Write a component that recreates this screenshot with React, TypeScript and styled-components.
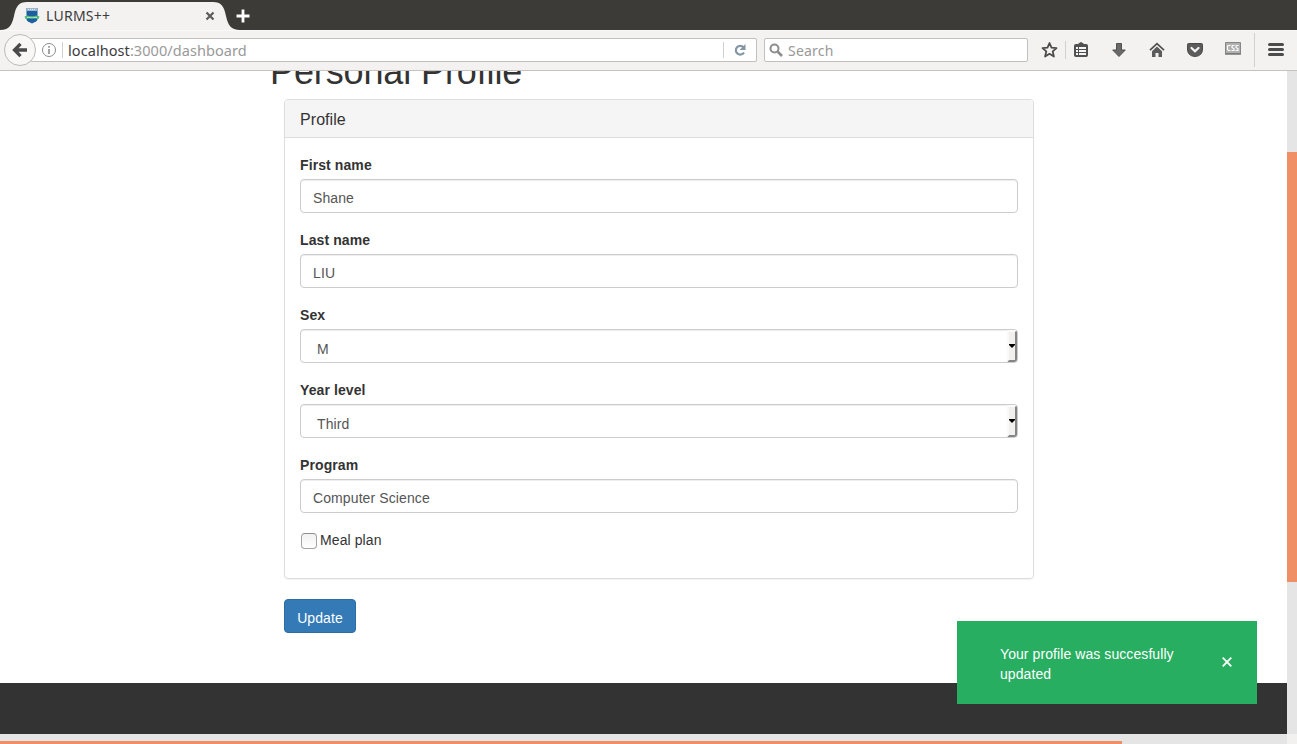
import React from "react";
import styled, { createGlobalStyle } from "styled-components";

const GlobalStyle = createGlobalStyle`
  * { box-sizing: border-box; }
  body { margin: 0; overflow: hidden; background: #fff; color: #333; font: 14px/20px "Liberation Sans", Arial, sans-serif; }
  svg { display: block; flex: none; }
`;

const Window = styled.div`
  display: flex;
  flex-direction: column;
  width: 1297px;
  height: 744px;
`;

const TabStrip = styled.div`
  display: flex;
  position: relative;
  height: 30px;
  flex: none;
  background: #3c3b37;
`;

const TabShape = styled.svg`
  position: absolute;
  left: 0;
  top: 0;
`;

const Tab = styled.div`
  position: relative;
  display: flex;
  align-items: center;
  width: 228px;
  height: 30px;
  padding: 1px 11px 0 24px;
`;

const ChromeText = styled.span<{ $size: number; $spacing?: number; $color?: string }>`
  font-family: "Noto Sans", "Open Sans", sans-serif;
  font-size: ${(p) => p.$size}px;
  line-height: 20px;
  letter-spacing: ${(p) => p.$spacing ?? 0}px;
  color: ${(p) => p.$color ?? "#3c3c3c"};
  white-space: pre;
`;

const TabTitle = styled(ChromeText)`
  flex: 1;
  margin-left: 6px;
`;

const NewTab = styled.div`
  position: relative;
  padding: 9px 0 0 8px;
`;

const Toolbar = styled.div`
  display: flex;
  align-items: center;
  height: 41px;
  flex: none;
  padding: 0 0 1px 4px;
  background: #f3f2f0;
  border-bottom: 1px solid #c6c2bf;
  border-top: 1px solid #f9f8f7;
`;

const BackButton = styled.div`
  position: relative;
  display: flex;
  align-items: center;
  justify-content: center;
  width: 32px;
  height: 32px;
  flex: none;
  border: 1px solid #bdbab7;
  border-radius: 50%;
  background: #f8f7f6;
`;

const Field = styled.div<{ $width: number }>`
  display: flex;
  align-items: center;
  width: ${(p) => p.$width}px;
  height: 24px;
  flex: none;
  background: #fff;
  border: 1px solid #c2bfbc;
  border-radius: 2px;
`;

const AddressBar = styled(Field)`
  margin-left: -6px;
  padding-left: 11px;
  border-left: 0;
`;

const SearchBar = styled(Field)`
  margin-left: 7px;
  padding-left: 4px;
`;

const Divider = styled.div<{ $height: number; $left: number; $right: number }>`
  width: 1px;
  height: ${(p) => p.$height}px;
  flex: none;
  margin: 0 ${(p) => p.$right}px 0 ${(p) => p.$left}px;
  background: #d2cfcc;
`;

const Address = styled.div`
  display: flex;
  flex: 1;
`;

const IconRow = styled.div`
  display: flex;
  align-items: center;
  margin-left: 13px;
`;

const Main = styled.div`
  display: grid;
  grid-template-columns: 1287px 10px;
  grid-template-rows: 663px 10px;
  height: 673px;
`;

const Viewport = styled.main`
  position: relative;
  display: flex;
  flex-direction: column;
  overflow: hidden;
  background: #fff;
`;

const VerticalTrack = styled.div`
  background: #e5e5e5;
  padding-top: 81px;
`;

const VerticalThumb = styled.div`
  height: 430px;
  background: #f08e65;
`;

const HorizontalTrack = styled.div`
  display: flex;
  align-items: flex-end;
  background: #e5e5e5;
`;

const HorizontalThumb = styled.div`
  width: 1122px;
  height: 3px;
  background: #f08e65;
`;

const Corner = styled.div`
  background: #f2f1f0;
`;

const Content = styled.div`
  flex: 1;
  padding-left: 269px;
`;

const Heading = styled.h1`
  margin: -19px 0 7px;
  padding-left: 1px;
  font-size: 36px;
  line-height: 40px;
  font-weight: 400;
  letter-spacing: -0.12px;
`;

const Form = styled.form`
  width: 750px;
  margin-left: 15px;
`;

const Panel = styled.section`
  height: 480px;
  border: 1px solid #ddd;
  border-radius: 4px;
  box-shadow: 0 1px 1px rgba(0, 0, 0, 0.05);
`;

const PanelHeader = styled.h3`
  height: 38px;
  margin: 0;
  padding: 10px 15px 0;
  font-size: 16px;
  line-height: 19px;
  font-weight: 400;
  letter-spacing: 0.07px;
  background: #f5f5f5;
  border-bottom: 1px solid #ddd;
  border-radius: 3px 3px 0 0;
`;

const PanelBody = styled.div`
  padding: 17px 15px 15px;
`;

const Group = styled.div`
  margin-bottom: 15px;
`;

const Label = styled.label`
  display: block;
  height: 20px;
  margin-bottom: 4px;
  line-height: 20px;
  font-weight: 700;
  letter-spacing: 0.1px;
`;

const Control = styled.div<{ $select?: boolean }>`
  display: flex;
  justify-content: space-between;
  height: 34px;
  margin-bottom: 17px;
  padding: ${(p) => (p.$select ? "9px 0 0 16px" : "8px 12px 0")};
  color: #555;
  letter-spacing: 0.1px;
  border: 1px solid #ccc;
  border-radius: 4px;
  box-shadow: inset 0 1px 1px rgba(0, 0, 0, 0.075);
`;

const SelectArrow = styled.div`
  width: 10px;
  height: 32px;
  margin-top: -9px;
  padding: 12px 0 0;
  background: #f1f0ee;
  border-left: 2px solid #f9f9f9;
  border-right: 2px solid #858585;
  border-bottom: 2px solid #858585;
  border-top: 2px solid #fafafa;
  border-radius: 0 3px 3px 0;
`;

const CheckLabel = styled.label`
  display: flex;
  height: 20px;
  letter-spacing: 0.1px;
`;

const CheckBox = styled.span`
  width: 16px;
  height: 16px;
  margin: 3px 3px 0 1px;
  border: 1px solid #a3a3a3;
  border-top-color: #8f8f8f;
  border-radius: 4px;
  background: linear-gradient(#f1f1f1, #fff);
`;

const UpdateButton = styled.button`
  display: block;
  width: 72px;
  height: 34px;
  margin-top: 20px;
  padding: 4px 0 0;
  color: #fff;
  font: inherit;
  letter-spacing: 0.1px;
  background: #337ab7;
  border: 1px solid #2e6da4;
  border-radius: 4px;
`;

const Footer = styled.footer`
  height: 51px;
  flex: none;
  background: #333;
`;

const Toast = styled.div`
  position: absolute;
  right: 30px;
  bottom: 30px;
  display: flex;
  align-items: flex-start;
  width: 300px;
  height: 83px;
  padding: 23px 25px 0 43px;
  color: #fff;
  background: #27ae60;
`;

const ToastText = styled.p`
  flex: 1;
  margin: 0 30px 0 0;
  letter-spacing: 0.08px;
`;

const ToastClose = styled.div`
  margin-top: 13px;
`;

const Favicon = () => (
  <svg width="16" height="16" viewBox="0 0 16 16">
    <path d="M2.500 0h11v11q0 1.500-1.500 2.500l-4 2-4-2q-1.500-1-1.500-2.500z" fill="#1b5f9f" />
    <path d="M2.500 0h11v3h-11z" fill="#9eb7cd" />
    <path d="M4 1.500h8" stroke="#dce7ef" strokeDasharray="1 1" />
    <path d="M.5 8.500L3 7.500q5 1.500 10 0l2.500 1-1 2.500q-6.500-1.500-13 0z" fill="#4dbb79" />
    <path d="M3 9.300q5 1 10 0" stroke="#b4e3c5" fill="none" />
  </svg>
);

const StarIcon = () => (
  <svg width="17" height="18" viewBox="0 0 17 18">
    <path d="M8.500 2l2 4.600 5 .5-3.800 3.300 1.200 5.100-4.400-2.700-4.400 2.700 1.200-5.100-3.800-3.300 5-.5z" fill="none" stroke="#4c4c4c" strokeWidth="1.800" strokeLinejoin="round" />
  </svg>
);

const ClipboardIcon = () => (
  <svg width="16" height="16" viewBox="0 0 16 16">
    <path d="M2.500 2.500H5L7.200.8h1.600L11 2.500h2.500q1 0 1 1v10q0 1-1 1h-11q-1 0-1-1v-10q0-1 1-1z" fill="#505050" stroke="#505050" />
    <path d="M3 6h2m1 0h7M3 9h2m1 0h7M3 12h2m1 0h7" stroke="#f5f5f5" strokeWidth="2" />
  </svg>
);

const DownloadIcon = () => (
  <svg width="16" height="16" viewBox="0 0 16 16">
    <path d="M5.500 1.500h5V8h3.800L8 14.500 1.700 8h3.800z" fill="#696969" stroke="#505050" strokeLinejoin="round" />
  </svg>
);

const HomeIcon = () => (
  <svg width="16" height="16" viewBox="0 0 16 16">
    <path d="M1 8.200L8 1.700l7 6.500" fill="none" stroke="#505050" strokeWidth="1.700" />
    <path d="M3 9.300l5-4.800 5 4.800V15H9.500v-4h-3v4H3z" fill="#5c5c5c" />
  </svg>
);

const PocketIcon = () => (
  <svg width="16" height="16" viewBox="0 0 16 16">
    <path d="M1.500 1.500h13q1 0 1 1V7q0 7-7.500 7.500Q.5 14 .5 7V2.500q0-1 1-1z" fill="#5c5c5c" stroke="#484848" />
    <path d="M4.500 6L8 9.300 11.500 6" fill="none" stroke="#f5f5f5" strokeWidth="2.200" strokeLinecap="round" />
  </svg>
);

const CssIcon = () => (
  <svg width="16" height="13" viewBox="0 0 16 13">
    <path d="M.5.5h15v11H.5z" fill="#b0b0b0" stroke="#858585" />
    <path d="M0 12h16" stroke="#777" strokeWidth="1.500" />
    <path d="M5.500 3.500H4L2.500 4v3.500L3.500 8.500h2M9.500 3.500h-2L7 4v1.500l2 1.200V8.500H6.500M13.500 3.500h-2L11 4v1.500l2 1.200V8.500h-2.500" fill="none" stroke="#fff" strokeWidth="1.100" />
  </svg>
);

const IconSlot = styled.div<{ $left: number; $top?: number }>`
  margin-left: ${(p) => p.$left}px;
  margin-top: ${(p) => p.$top ?? 0}px;
`;

const fields = [
  { label: "First name", value: "Shane" },
  { label: "Last name", value: "LIU" },
  { label: "Sex", value: "M", select: true },
  { label: "Year level", value: "Third", select: true },
  { label: "Program", value: "Computer Science" },
];

export default function App() {
  return (
    <Window>
      <GlobalStyle />
      <TabStrip>
        <TabShape width="245" height="30">
          <path d="M0 30C10 30 12 24 14 16C16 6 19 2 27 2H213C221 2 224 6 226 16C228 25 231 30 240 30Z" fill="#f3f2f0" />
        </TabShape>
        <Tab>
          <Favicon />
          <TabTitle $size={14} $spacing={0.25}>LURMS++</TabTitle>
          <svg width="14" height="14" viewBox="0 0 14 14">
            <path d="M3.500 3.500l7 7m0-7l-7 7" stroke="#5b5b59" strokeWidth="2.200" />
          </svg>
        </Tab>
        <NewTab>
          <svg width="14" height="14" viewBox="0 0 14 14">
            <path d="M7 .5v13M.5 7h13" stroke="#fff" strokeWidth="2.800" />
          </svg>
        </NewTab>
      </TabStrip>
      <Toolbar>
        <BackButton>
          <svg width="16" height="16" viewBox="0 0 16 16">
            <path d="M8.500 1.800L2.500 8l6 6.200M3 8h12" fill="none" stroke="#4a4a4a" strokeWidth="3.300" />
          </svg>
        </BackButton>
        <AddressBar $width={727}>
          <svg width="16" height="16" viewBox="0 0 16 16">
            <circle cx="8" cy="8" r="6.500" fill="none" stroke="#8c8c8c" />
            <path d="M8 7v5M8 4v1.800" stroke="#8c8c8c" strokeWidth="1.600" />
          </svg>
          <Divider $height={16} $left={5} $right={5} />
          <Address>
            <ChromeText $size={14.5} $spacing={0.07}>localhost</ChromeText>
            <ChromeText $size={14.5} $spacing={0.07} $color="#999">:3000/dashboard</ChromeText>
          </Address>
          <Divider $height={16} $left={0} $right={9} />
          <svg width="14" height="14" viewBox="0 0 14 14">
            <path d="M10.500 4.200A4.400 4.400 0 1 0 11 9.500" fill="none" stroke="#8495a5" strokeWidth="2.200" />
            <path d="M12.500 1v6h-6z" fill="#8495a5" />
          </svg>
          <Divider $height={0} $left={8} $right={0} />
        </AddressBar>
        <SearchBar $width={264}>
          <svg width="15" height="15" viewBox="0 0 15 15">
            <circle cx="5.500" cy="5.500" r="4" fill="none" stroke="#8d8d8d" strokeWidth="2" />
            <path d="M8.500 8.500L13 13" stroke="#8d8d8d" strokeWidth="2.600" />
          </svg>
          <IconSlot $left={4} $top={2}>
            <ChromeText $size={14} $spacing={0.2} $color="#999">Search</ChromeText>
          </IconSlot>
        </SearchBar>
        <IconRow>
          <StarIcon />
          <Divider $height={18} $left={7} $right={7} />
          <ClipboardIcon />
          <IconSlot $left={22}><DownloadIcon /></IconSlot>
          <IconSlot $left={22}><HomeIcon /></IconSlot>
          <IconSlot $left={22}><PocketIcon /></IconSlot>
          <IconSlot $left={22} $top={-3}><CssIcon /></IconSlot>
          <Divider $height={34} $left={13} $right={13} />
          <svg width="16" height="16" viewBox="0 0 16 16">
            <path d="M1.500 2.500h13M1.500 7.500h13M1.500 12.500h13" stroke="#4c4c4c" strokeWidth="3" strokeLinecap="round" />
          </svg>
        </IconRow>
      </Toolbar>
      <Main>
        <Viewport>
          <Content>
            <Heading>Personal Profile</Heading>
            <Form>
              <Panel>
                <PanelHeader>Profile</PanelHeader>
                <PanelBody>
                  {fields.map((f) => (
                    <React.Fragment key={f.label}>
                      <Label>{f.label}</Label>
                      <Control $select={f.select}>
                        {f.value}
                        {f.select && (
                          <SelectArrow>
                            <svg width="6" height="4" viewBox="0 0 6 4"><path d="M0 0h6v1L3 4 0 1z" fill="#000" /></svg>
                          </SelectArrow>
                        )}
                      </Control>
                    </React.Fragment>
                  ))}
                  <Group>
                    <CheckLabel><CheckBox />Meal plan</CheckLabel>
                  </Group>
                </PanelBody>
              </Panel>
              <UpdateButton type="button">Update</UpdateButton>
            </Form>
          </Content>
          <Footer />
          <Toast>
            <ToastText>Your profile was succesfully updated</ToastText>
            <ToastClose>
              <svg width="10" height="10" viewBox="0 0 10 10"><path d="M.7.700l8.600 8.600m0-8.600l-8.600 8.600" stroke="#fff" strokeWidth="1.800" /></svg>
            </ToastClose>
          </Toast>
        </Viewport>
        <VerticalTrack><VerticalThumb /></VerticalTrack>
        <HorizontalTrack><HorizontalThumb /></HorizontalTrack>
        <Corner />
      </Main>
    </Window>
  );
}
